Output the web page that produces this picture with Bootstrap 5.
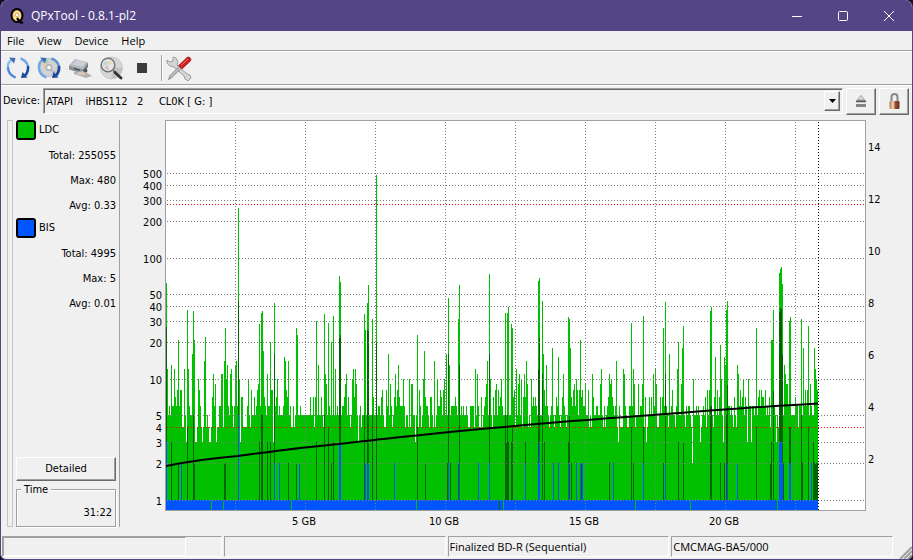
<!DOCTYPE html>
<html lang="en">
<head>
<meta charset="utf-8">
<meta name="viewport" content="width=device-width, initial-scale=1">
<title>QPxTool - 0.8.1-pl2</title>
<link href="https://cdn.jsdelivr.net/npm/bootstrap@5.3.0/dist/css/bootstrap.min.css" rel="stylesheet">
<style>
:root{--face:#f0f0f0;--line:#a0a0a0;--dark:#696969;--accent:#544587}
html{background:#14101f}
body{font:11px/14px "DejaVu Sans Condensed","Noto Sans",sans-serif;color:#000;background:#14101f;min-height:100vh}
.app-window{background:var(--face);border:1px solid var(--accent);border-top:0;border-radius:8px 8px 6px 6px;overflow:hidden}
.title-bar{background:var(--accent);color:#fff;height:31px;font:12px/16px "Open Sans","Noto Sans",sans-serif}
.title-bar .app-icon{margin:0 6px 0 8px}
.win-btn{width:46px;height:31px;border:0;background:none;padding:0;color:#fff}
.menu-row{height:20px;border-bottom:1px solid var(--line);font:11px/18px "Open Sans","Noto Sans",sans-serif;padding-left:2px;gap:5px}
.menu-row a{color:#000;text-decoration:none}
.tool-row{height:34px;border-top:1px solid #fff;border-bottom:1px solid var(--line);padding-left:1px}
.tool-btn{width:31px;height:30px;border:0;background:none;padding:0}
.tool-sep{width:2px;height:26px;border-left:1px solid var(--line);border-right:1px solid #fff;margin:0 0 0 4px}
.device-row{border-top:1px solid #fff;padding:2px 3px 3px 2px;height:32px;gap:3px}
.combo{height:26px;border:1px solid;border-color:var(--line) #fff #fff var(--line);box-shadow:inset 1px 1px var(--dark);padding:2px}
.combo select{appearance:none;border:0;background:none;padding:2px 0 0;outline:0;color:#000}
.raised{background:var(--face);border:1px solid;border-color:#fff var(--dark) var(--dark) #fff;box-shadow:inset -1px -1px var(--line);border-radius:0;color:#000;padding:0}
.combo-arrow{width:16px}
.side-btn{width:30px;height:27px}
.main-row{padding-top:3px}
.side-wrap{padding:0 0 9px 6px}
.grip-line{width:6px;border:1px solid #c4c4c4}
.side-panel{width:107px;border-right:1px solid var(--line);padding:0 3px}
.swatch-row{gap:3px}
.swatch{width:20px;height:20px;border:2px solid #000;border-radius:3px}
.swatch-ldc{background:#00c000}
.swatch-bis{background:#0055ff}
.stat-list{line-height:25px;margin-top:3px}
.detail-btn{height:24px}
.time-box{border:1px solid var(--line);box-shadow:inset 1px 1px #fff,1px 1px #fff;height:38px;margin:8px 0 0;padding:16px 3px 0;position:relative;text-align:right}
.time-box legend{font-size:11px;line-height:14px;float:none;width:auto;margin:0 0 0 4px;padding:0 3px;position:absolute;top:-7px;left:0;background:var(--face)}
.axis-l{width:45px;overflow:visible}
.axis-r{width:46px;overflow:visible}
.plot{border:1px solid var(--line);background:#fff}
.axis-x{height:25px;padding:0 46px 0 45px}
.axis-l text,.axis-r text,.axis-x text{font:11px "DejaVu Sans Condensed","Noto Sans",sans-serif}
.status-row{height:23px;padding:0 19px 2px 1px;gap:2px}
.status-cell{border:1px solid;border-color:var(--line) #fff #fff var(--line);padding:1px;flex:1 1 0;font:11px/18px "Open Sans","Noto Sans",sans-serif}
.idle-bar{width:84%;border:1px solid;border-color:var(--line) #fff #fff var(--line)}
.size-grip{position:absolute;right:0;bottom:0}
</style>
<script src="https://cdn.jsdelivr.net/npm/bootstrap@5.3.0/dist/js/bootstrap.bundle.min.js"></script>
</head>
<body class="d-flex flex-column">
<div class="app-window d-flex flex-column flex-grow-1 position-relative">
  <header class="title-bar d-flex align-items-center flex-shrink-0">
    <svg class="app-icon" width="16" height="18" viewBox="0 0 16 18" aria-hidden="true">
      <defs><radialGradient id="q"><stop offset="0" stop-color="#fffbe0"/><stop offset=".6" stop-color="#f6dc9a"/><stop offset="1" stop-color="#f0a030"/></radialGradient></defs>
      <ellipse cx="8" cy="8.500" rx="5.500" ry="6.500" fill="url(#q)" stroke="#000" stroke-width="2"/>
      <circle cx="8" cy="8" r="1.800" fill="#fff" stroke="#d8a860"/><path d="M8 11l3 4 3 1" fill="none" stroke="#000" stroke-width="2.200"/>
    </svg>
    <span class="flex-grow-1">QPxTool - 0.8.1-pl2</span>
    <button class="win-btn" aria-label="Minimize"><svg width="10" height="10"><path d="M0 5.500h10" stroke="#fff"/></svg></button>
    <button class="win-btn" aria-label="Maximize"><svg width="10" height="10"><rect x=".5" y=".5" width="9" height="9" rx="1" fill="none" stroke="#fff"/></svg></button>
    <button class="win-btn" aria-label="Close"><svg width="10" height="10"><path d="M0 0l10 10M10 0L0 10" stroke="#fff"/></svg></button>
  </header>
  <nav class="menu-row d-flex align-items-center flex-shrink-0" aria-label="Menu">
    <a class="px-1" href="#">File</a><a class="px-1" href="#">View</a><a class="px-1" href="#">Device</a><a class="px-1" href="#">Help</a>
  </nav>
  <div class="tool-row d-flex align-items-center flex-shrink-0">
    <button class="tool-btn" aria-label="Rescan bus"><svg width="26" height="26" viewBox="0 0 26 26"><path d="M10.500 22.500C1 19 1 8 7 4.500" fill="none" stroke="#8dbdf0" stroke-width="2.400"/><path d="M10.500 22.500C6 20.500 3 17 3 12" fill="none" stroke="#4c86cf" stroke-width="2"/><path d="M4 2.500l6.500 .5-1.500 5.500z" fill="#3b6cb8"/><path d="M15.500 3.500c9 3 9.500 13 4.500 17" fill="none" stroke="#6fa6e4" stroke-width="2.400"/><path d="M23 11c.5 4-1 7-3 9.500" fill="none" stroke="#1f479c" stroke-width="2.400"/><path d="M16 23l6.500-.5-5-5.500z" fill="#1f479c"/></svg></button>
    <button class="tool-btn" aria-label="Reload media"><svg width="26" height="26" viewBox="0 0 26 26"><circle cx="13" cy="12.500" r="9" fill="#d2d2d2" stroke="#aaa" stroke-width=".6"/><path d="M13 12L8 5l4-1.500z" fill="#a8d5c0"/><path d="M13 12L5 9l2-3z" fill="#e7c7aa"/><path d="M14 14l7 3-3 4z" fill="#b9b5d8"/><circle cx="13" cy="12.500" r="3.500" fill="#b5b5b5"/><circle cx="13" cy="12.500" r="1.800" fill="#fff"/><path d="M10.500 22.500C1 19 1 8 7 4.500" fill="none" stroke="#6ea8e8" stroke-width="2.400"/><path d="M4 2.500l6.500 .5-1.500 5.500z" fill="#3b6cb8"/><path d="M15.500 3.500c9 3 9.500 13 4.500 17" fill="none" stroke="#5b92d6" stroke-width="2.400"/><path d="M23 11c.5 4-1 7-3 9.500" fill="none" stroke="#1f479c" stroke-width="2.600"/><path d="M16 23l6.500-.5-5-5.500z" fill="#1f479c"/></svg></button>
    <button class="tool-btn" aria-label="Drive info"><svg width="26" height="26" viewBox="0 0 26 26"><path d="M2 10.500L8 4l13 3.500-5 7z" fill="#b4b9c0"/><path d="M5 9.500L9.500 5l9.500 2.700-4 4z" fill="#cbcfd6"/><path d="M2 10.500l14 4V19L2 14.500z" fill="#8d9299"/><path d="M16 14.500l5-7V12l-5 7z" fill="#767b82"/><path d="M7 17l10-1 8 5-6 2-12-4z" fill="#b2b2b2"/><ellipse cx="14.500" cy="18.500" rx="4.500" ry="1.800" fill="#d9c4b8"/><circle cx="18.500" cy="15.500" r="2" fill="#555"/><path d="M7 13.500l6 1.700" stroke="#333"/></svg></button>
    <button class="tool-btn" aria-label="Media info"><svg width="26" height="26" viewBox="0 0 26 26"><circle cx="13.500" cy="13" r="11" fill="#d6d6d6" stroke="#bbb" stroke-width=".7"/><path d="M13 24a11 11 0 0 0 11-11l-8-1z" fill="#c2c2c2"/><circle cx="10" cy="10" r="6.800" fill="#e7e8e5" stroke="#777" stroke-width="1.500"/><path d="M5 11c0-4 3-5 5-5l-1 4z" fill="#b9d9e0"/><path d="M10 6c3 0 4 1 4.500 3L10 10z" fill="#e8dca8"/><path d="M6 13l4-3 1 5z" fill="#dab8c8"/><path d="M15 15l3 3" stroke="#777" stroke-width="2"/><path d="M17 17.500l6 5.500" stroke="#333" stroke-width="3" stroke-linecap="round"/></svg></button>
    <button class="tool-btn" aria-label="Stop"><svg width="26" height="26" viewBox="0 0 26 26"><rect x="8" y="8" width="10" height="10" fill="#3c3c3c"/></svg></button>
    <span class="tool-sep"></span>
    <button class="tool-btn" aria-label="Preferences"><svg width="26" height="26" viewBox="0 0 26 26"><path d="M1 5l3 2 3-1 0-4 3 1 2 4-1 3 10 9 3 1 1 3-3 3-3-2-1-3L8 12l-4-1-3-3z" fill="#d5d5d5" stroke="#8b8b8b" stroke-width=".8"/><path d="M2.500 24.500l1.500-4L14 10.500l2 2L6 22.500z" fill="#bbb" stroke="#777" stroke-width=".7"/><path d="M12.500 10.500L21 2.500c2-1.500 5 1 3.500 3.500l-8.500 8z" fill="#d21d20" stroke="#8a1012" stroke-width=".6"/><path d="M15 10.500l7-6.500" stroke="#f47a72"/></svg></button>
  </div>
  <div class="device-row d-flex align-items-center flex-shrink-0">
    <label for="dev">Device:</label>
    <div class="combo d-flex flex-grow-1">
      <select id="dev" class="flex-grow-1"><option>ATAPI &nbsp;&nbsp; iHBS112 &nbsp; 2 &nbsp; &nbsp; CL0K [ G: ]</option></select>
      <span class="combo-arrow raised d-flex align-items-center justify-content-center"><svg width="7" height="4"><path d="M0 0h7L3.500 4z"/></svg></span>
    </div>
    <button class="side-btn raised" aria-label="Eject"><svg width="12" height="14" viewBox="0 0 12 14"><path d="M6 1l5 6H1z" fill="#999"/><path d="M6 2l3 3.500H3z" fill="#ddd"/><path d="M1 7.500h10" stroke="#555" stroke-width="1.500"/><rect x="1" y="10" width="10" height="3" fill="#858585"/></svg></button>
    <button class="side-btn raised" aria-label="Lock tray"><svg width="13" height="17" viewBox="0 0 13 17"><defs><linearGradient id="lk"><stop offset="0" stop-color="#b8734b"/><stop offset=".35" stop-color="#f4d8bf"/><stop offset=".6" stop-color="#96502c"/><stop offset="1" stop-color="#63301c"/></linearGradient></defs><path d="M3.500 9V4a3 3 0 0 1 6 0v5" fill="none" stroke="#888" stroke-width="2"/><rect x="1.500" y="8" width="10" height="8" rx="1" fill="url(#lk)"/></svg></button>
  </div>
  <main class="main-row d-flex flex-grow-1">
    <div class="side-wrap d-flex"><div class="grip-line"></div>
      <aside class="side-panel d-flex flex-column">
        <div class="swatch-row d-flex align-items-center"><span class="swatch swatch-ldc"></span>LDC</div>
        <div class="stat-list text-end"><div>Total: 255055</div><div>Max: 480</div><div>Avg: 0.33</div></div>
        <div class="swatch-row d-flex align-items-center"><span class="swatch swatch-bis"></span>BIS</div>
        <div class="stat-list text-end"><div>Total: 4995</div><div>Max: 5</div><div>Avg: 0.01</div></div>
        <button class="detail-btn raised mt-auto">Detailed</button>
        <fieldset class="time-box"><legend>Time</legend><output>31:22</output></fieldset>
      </aside>
    </div>
    <section class="d-flex flex-column flex-grow-1" aria-label="Error scan">
      <div class="d-flex flex-grow-1">
        <svg class="axis-l flex-shrink-0" id="axisL" height="100%"></svg>
        <svg class="plot flex-grow-1" id="plot" width="100" height="100%" viewBox="166 121 699 389" preserveAspectRatio="none" shape-rendering="crispEdges" role="img" aria-label="LDC and BIS errors"></svg>
        <svg class="axis-r flex-shrink-0" id="axisR" height="100%"></svg>
      </div>
      <div class="axis-x"><svg id="axisX" width="100%" height="18"></svg></div>
    </section>
  </main>
  <footer class="status-row d-flex flex-shrink-0">
    <div class="status-cell d-flex p-0"><div class="idle-bar"></div></div>
    <div class="status-cell"></div>
    <div class="status-cell">Finalized BD-R (Sequential)</div>
    <div class="status-cell">CMCMAG-BA5/000</div>
  </footer>
  <svg class="size-grip" width="13" height="13" aria-hidden="true"><path d="M1 13L13 1M5 13l8-8M9 13l4-4" stroke="#a0a0a0" stroke-width="2"/></svg>
</div>
<script>
// LDC per column, one base-36 digit each; taller peaks are listed separately.
const ldc = (
 "zc565d66c768l68844c53zc655gzl334a8643 4em454334 7b693446 6bb4eza d65bc646de6za377444 46a54 8557 5689z6zzh765b66k883z67a5655 56fe87e564 464 5zz556555555555755747z5d5575 4zb95z65kz6 5c56z" +
 "z956679b5 7545ac7c95 3564zz6zz655z587z555 665785 448 6g59645 7b68d7666a64 554a4995 53z5486 45ah766 54775 4e45a6 68758a5gz5d566 6676zz4565655 65446666 4c5b64474 56 79ezba54758958 67a65zfzz55zzd78 4c5" +
 "9b5a47b7e9454a67676zz75z5g86d65 456i54576f5457b654zz7i7 6896a858l786695584 54b75566559c546 45 67b9a765 6e436444cb6544 66z6c9455956 69z473457 575b6c944575 7z6z6 54g568554 6ck559iz54656 654 2a5565653 4565 7485 8zz547f5857ja53fdzz6656547 54db6867a576 3a6636656z578 6877685 6574llz6z3546zzzzdb9966zz5 557 664 66 gzi68685z96 55ica8b").replace(/ /g, "");
const peaks = {166:62,187:37,193:36,225:26,238:256,259:28,261:35,262:36,274:42,296:26,297:23,316:30,324:34,328:29,333:33,339:70,340:63,
 364:34,365:25,367:42,368:59,372:31,376:480,417:23,448:46,458:31,459:59,489:73,505:35,507:35,508:39,511:28,512:26,538:64,539:68,542:44,
 568:32,569:31,631:29,643:33,663:26,665:43,683:27,710:36,711:39,726:37,727:44,756:26,773:37,779:75,780:80,781:84,782:60,789:30,790:32,801:31,808:27};
const yOf = v => Math.round(500 - 121.3 * Math.log10(v));
let green = "";
for (let i = 0; i < 652; i++) {
  const x = 166 + i;
  let v = parseInt(ldc[i] || "5", 36);
  if (v === 35) v = 5;
  v = peaks[x] || v;
  green += `M${x} 500V${yOf(v)}h1V500z`;
}
// [column, top] of BIS bars: shaded where they stand behind LDC, solid up to the plain value
const shade = [[166,327],[171,442],[178,463],[187,427],[193,415],[194,463],[224,463],[225,463],[238,301],[259,442],[261,415],[262,415],[267,442],[270,442],[274,354],
 [288,463],[296,463],[316,442],[324,415],[328,427],[331,463],[333,442],[339,338],[340,335],[364,415],[367,330],[368,331],[372,415],[376,343],[417,427],[425,463],[447,463],[448,354],
 [450,463],[458,463],[459,365],[489,354],[505,415],[506,442],[507,415],[508,442],[511,442],[512,427],[525,442],[538,369],[539,338],[542,374],[544,442],[568,442],[569,415],[571,463],
 [581,463],[609,463],[631,427],[633,463],[643,427],[663,463],[665,374],[678,442],[683,442],[710,406],[711,406],[720,463],[724,463],[726,415],[727,385],[756,427],[770,463],[771,442],
 [773,391],[779,312],[780,308],[781,309],[782,355],[783,463],[789,427],[790,427],[801,415],[802,463],[808,427],[813,442],[814,463],[815,463],[816,463],[817,463]];
const solid = [[166,442],[181,463],[238,415],[274,463],[279,463],[299,463],[339,443],[340,443],[365,463],[367,463],[368,463],[394,463],[448,463],[459,463],[478,463],[489,463],
 [525,463],[538,463],[539,442],[553,463],[558,463],[568,463],[576,463],[580,463],[582,463],[613,463],[643,463],[665,463],[727,463],[737,463],[779,442],[780,442],[781,442],[782,463],[789,463],[790,463],[811,463]];
const gaps = [211,223,291,416,503,635,690,777];
const grid = [[500,173],[400,185],[300,200],[200,221],[100,258],[50,294],[40,306],[30,321],[20,342],[10,379],[5,415],[4,427],[3,442],[2,463],[1,500]];
const bars = a => a.map(([x, t]) => `M${x} 500V${t}h1V500z`).join("");
let s = `<path fill="#00c000" d="${green}"/><path fill="#006400" d="${bars(shade)}"/><path fill="#0055ff" d="${bars(solid)}M166 500h652v10h-652z"/>`;
s += `<path fill="#00c000" d="${gaps.map(x => `M${x} 501h1v9h-1z`).join("")}"/><path fill="#006400" d="M499 501h1v9h-1z"/>`;
const dots = 'fill="none" stroke-dasharray="1 2"';
s += `<path ${dots} stroke="#808080" d="${grid.filter(g => g[0] !== 4).map(g => `M167 ${g[1]}.5H864`).join("")}"/>`;
s += `<path ${dots} stroke="#808080" d="${[235,305,375,445,515,585,655,725,795].map(x => `M${x}.5 122V510`).join("")}"/>`;
s += `<path ${dots} stroke="#ff0000" d="M167 204.5H864M167 427.5H864"/><path ${dots} stroke="#000000" d="M818.5 122V510"/>`;
s += `<path fill="none" stroke="#000" stroke-width="2" shape-rendering="auto" d="M166 466C190 461 215 458 238 456C275 451 305 447 339 444C365 441 390 438 417 435.500C448 432 480 429 510 426.500C565 421 625 417 680 413C725 409 775 406 818 403.500"/>`;
document.getElementById("plot").innerHTML = s;
const pct = y => ((y - 120) / 391 * 100).toFixed(2) + "%";
document.getElementById("axisL").innerHTML = grid.map(([v, y]) => `<text x="42" y="${pct(y + 1)}" dy="4" text-anchor="end">${v}</text>`).join("");
document.getElementById("axisR").innerHTML = [14,12,10,8,6,4,2].map(v => `<text x="2" y="${pct(511 - v * 26)}" dy="4">${v}</text>`).join("");
document.getElementById("axisX").innerHTML = [5,10,15,20].map(v => `<text x="${(v * 28 - 1) / 701 * 100}%" y="14" text-anchor="middle">${v} GB</text>`).join("");
</script>
</body>
</html>
